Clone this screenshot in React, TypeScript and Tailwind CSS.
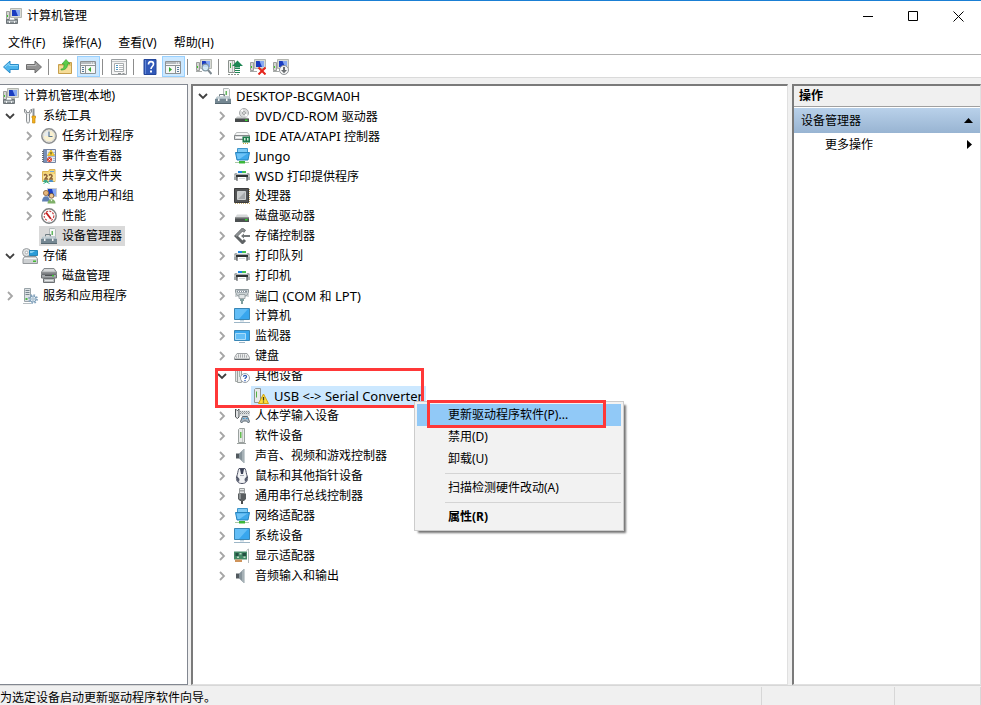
import { Fragment, type ReactNode } from "react";
import { clsx } from "clsx";

function Svg({ children, size = 16 }: { children: ReactNode; size?: number }) {
  return (
    <svg width={size} height={size} viewBox="0 0 16 16" className="block shrink-0" aria-hidden="true">
      {children}
    </svg>
  );
}

/* ---------- 共用图形 ---------- */

function TowerMonitor() {
  return (
    <>
      <path d="M0.5 3.5h3v8h-3z" fill="#d5d7d2" stroke="#9c9e9c" />
      <rect x="1" y="7" width="1" height="2" fill="#3fc72c" />
      <path d="M4.500 0.500h11v9h-11z" fill="#d9dcd6" stroke="#b4b7b1" />
      <rect x="6" y="2" width="8" height="6" fill="#1a3cc0" />
      <path d="M9.500 2H14v6h-2z" fill="#86a8f2" />
    </>
  );
}

function Management() {
  return (
    <Svg>
      <TowerMonitor />
      <path d="M8 10h4v1.500H8z" fill="#b5b7b2" />
      <path d="M0.500 11.500h11v4H0.500z" fill="#8b9296" stroke="#6d7478" />
      <path d="M3.500 11.500h5" stroke="#d6dbde" />
      <path d="M1 13.500h10" stroke="#b6bdc0" />
      <path d="M3 13h1v2H3zM8 13h1v2H8z" fill="#eef0f1" />
    </Svg>
  );
}

function Tools() {
  return (
    <Svg>
      <path d="M2.500 1v3l2 2v7.500c0 2 3 2 3 0V6l2-2V1L7.500 3v1.500h-3V3z" fill="#e4e6e7" stroke="#8c9093" />
      <path d="M6 7v6" stroke="#fff" />
      <path d="M11.500 0.500v8" stroke="#8c9093" strokeWidth="2" />
      <path d="M10 8h3.500v2H13v5h-2.500v-5H10z" fill="#f2b01c" stroke="#c98b10" strokeWidth="0.700" />
    </Svg>
  );
}

function ClockIcon() {
  return (
    <Svg>
      <circle cx="8" cy="8" r="7.200" fill="#fbf4d9" stroke="#8b8e91" strokeWidth="1.500" />
      <circle cx="8" cy="8" r="5.700" fill="#faf1d0" stroke="#dcdcda" strokeWidth="1" />
      <path d="M8 8V3A5 5 0 0 0 3 8z" fill="#e5ebf0" />
      <path d="M8 3.500V8.500h3.500" fill="none" stroke="#5b7896" strokeWidth="1.200" />
    </Svg>
  );
}

function EventLog() {
  return (
    <Svg>
      <path d="M2.500 1.500h12v13h-12z" fill="#e6ebf2" stroke="#7584a2" />
      <path d="M3 2h3v12H3z" fill="#7790b8" />
      <path d="M1 3.500h2M1 5.500h2M1 7.500h2M1 9.500h2M1 11.500h2M1 13.500h2" stroke="#646d7a" />
      <path d="M7 4.500h7M7 6.500h7M7 8.500h7M12 10.500h2M12 12.500h2" stroke="#a8bad4" />
      <path d="M10 2l3.500 5.500h-7z" fill="#ffd62a" stroke="#d6a71a" strokeWidth="0.700" />
      <path d="M10 4v2.500" stroke="#333" />
      <circle cx="8.500" cy="11.500" r="2.500" fill="#d6402e" />
      <path d="M7.500 10.500l2 2M9.500 10.500l-2 2" stroke="#fff" strokeWidth="0.800" />
    </Svg>
  );
}

function SharedFolder() {
  return (
    <Svg>
      <path d="M1.500 3.500h6l1-2h5.500v12h-12.500z" fill="#f4d678" stroke="#dcb452" />
      <path d="M9 3h4v1H9z" fill="#6ba5da" />
      <path d="M2 6h12v7H2z" fill="#f9e39d" />
      <path d="M3 7.500c1-1.500 3.500-1 3 1L4 11h3" fill="none" stroke="#8b6136" strokeWidth="1.500" />
      <path d="M8 7.500c1-1.500 3.500-1 3 1L9 11h3" fill="none" stroke="#8b6136" strokeWidth="1.500" />
      <path d="M2 14c0.500-3 4.500-3 5 0z" fill="#3ba88a" />
      <path d="M7.500 14c0.500-3 4.500-3 5 0z" fill="#4a8ec8" />
      <path d="M2.500 15.500l3-1.500 3 1.500" fill="none" stroke="#3fb184" />
    </Svg>
  );
}

function UsersIcon() {
  return (
    <Svg>
      <path d="M6.500 0.500h9v8h-9z" fill="#1a3cc0" stroke="#c6cace" />
      <path d="M11 1h4v7h-2z" fill="#86a8f2" />
      <circle cx="5" cy="5" r="2.600" fill="#e6b67b" stroke="#8a6238" strokeWidth="0.800" />
      <path d="M1 13.500c0-7 8-7 8 0z" fill="#5f7fb3" />
      <circle cx="10.500" cy="7.800" r="2.400" fill="#ecc591" stroke="#6b4a26" strokeWidth="0.800" />
      <path d="M6.500 15.500c0-6 8-6 8 0z" fill="#7fb069" />
      <path d="M9.500 11.500l1 2 1-2" fill="#fff" />
    </Svg>
  );
}

function Performance() {
  return (
    <Svg>
      <circle cx="8" cy="8" r="7.200" fill="#fff" stroke="#7d8082" strokeWidth="1.400" />
      <circle cx="8" cy="8" r="4.800" fill="none" stroke="#c94444" strokeWidth="1.200" strokeDasharray="2 1.200" />
      <path d="M5 4.500l5 6.500" stroke="#c41f1f" strokeWidth="1.800" />
      <path d="M7 12.500h3" stroke="#fff" strokeWidth="2" />
    </Svg>
  );
}

function DeviceManager() {
  return (
    <Svg>
      <path d="M8.500 0.500h5l1 1v7h-6z" fill="#f5f7f6" stroke="#b4babb" />
      <path d="M10.500 3H12v4h-1.500z" fill="#62b85e" />
      <path d="M4.500 9V6.500h5V9" fill="none" stroke="#6f7c82" />
      <path d="M2 8.500h12.500l1.500 3H0z" fill="#a9b9c1" />
      <path d="M0 11h16v4.500H0z" fill="#748792" />
      <path d="M2 9h12" stroke="#d7e0e4" />
      <path d="M3 10.500h1.500V13H3zM11 10.500h1.500V13H11z" fill="#f4f6f7" />
      <path d="M0 15.500h16" stroke="#566770" />
    </Svg>
  );
}

function Storage() {
  return (
    <Svg>
      <circle cx="4.500" cy="4.500" r="4" fill="#dfe1e2" stroke="#9b9fa2" />
      <circle cx="4.500" cy="4.500" r="1.300" fill="#fff" stroke="#979b9d" strokeWidth="0.700" />
      <path d="M7.500 2.500h8v5h-8z" fill="#2a9cd8" stroke="#2787b8" />
      <path d="M8 3h5l-3 2H8z" fill="#86d2f5" />
      <path d="M2.500 8.500h11.500l1.500 2.500v4.500H1V11z" fill="#cdd0d2" stroke="#94989b" />
      <path d="M2 10.500h12.500" stroke="#f7f7f7" />
      <rect x="11" y="12.500" width="3" height="1.500" fill="#45b933" />
    </Svg>
  );
}

function DiskManagement() {
  return (
    <Svg>
      <path d="M3 0.500h10l2.500 3.500v2H0.500V4z" fill="#bfc2c4" stroke="#85898c" />
      <path d="M3 2h10" stroke="#eceeee" />
      <path d="M1 5h14" stroke="#5e6265" />
      <path d="M0.500 6.500h15V10H0.500z" fill="#a3a7aa" stroke="#6c7073" />
      <path d="M4 7.500h8" stroke="#4f5355" />
      <path d="M2.500 10.500h11v4h-11z" fill="#b8bcbe" stroke="#6c7073" />
      <path d="M4 12.500h8" stroke="#e6e8e9" />
      <rect x="11" y="7" width="2" height="1.500" fill="#3bc130" />
    </Svg>
  );
}

function Services() {
  return (
    <Svg>
      <path d="M2.500 0.500h6v13h-6z" fill="#dde2e5" stroke="#9aa4a9" />
      <path d="M3.500 2.500h4M3.500 4.500h4M3.500 6.500h4" stroke="#79878f" />
      <rect x="3.500" y="10" width="2" height="2" fill="#4fb848" />
      <path d="M1 15.500h8" stroke="#b5bcc0" />
      <circle cx="11" cy="11" r="4" fill="none" stroke="#86a5be" strokeWidth="1.800" strokeDasharray="1.600 1.540" />
      <circle cx="11" cy="11" r="3" fill="#dfeaf2" stroke="#7fa0ba" strokeWidth="1" />
      <circle cx="11" cy="11" r="1.200" fill="#fff" stroke="#7393ad" strokeWidth="0.700" />
    </Svg>
  );
}

function Dvd() {
  return (
    <Svg>
      <circle cx="10" cy="5" r="4.500" fill="#dcdddd" stroke="#a6a9aa" />
      <path d="M10 5L6.500 2.500 8.500 1zM10 5l4 2-2 2z" fill="#fff" />
      <circle cx="10" cy="5" r="1.400" fill="#fff" stroke="#8b8e8f" strokeWidth="0.900" />
      <path d="M3 8.500h5l2 1h3.500l1.500 1.500H1z" fill="#c8cbcc" />
      <path d="M1 10.500h14V14H1z" fill="#464a4b" />
      <rect x="11" y="11.500" width="2.500" height="1.500" fill="#38d630" />
    </Svg>
  );
}

function Ide() {
  return (
    <Svg>
      <path d="M2.500 4.500h11l2 3H0.500z" fill="#f4f5f5" stroke="#b9bcbd" />
      <path d="M0.500 7.500h15v4H0.500z" fill="#dcdedf" stroke="#85898b" />
      <path d="M2 9.500h6" stroke="#fff" />
      <path d="M8.500 8.500H16v6H8.500z" fill="#1e7b4b" />
      <path d="M10 10h1.500v2.500H10zM13 10h1.500v2.500H13z" fill="#c8e7d4" />
      <path d="M9 15.500h6" stroke="#c9a83c" strokeDasharray="1 1" />
    </Svg>
  );
}

function NetworkIcon() {
  return (
    <Svg>
      <path d="M3.500 0.500h10v6h-10z" fill="#7ccaf5" stroke="#3f95c9" />
      <path d="M1.500 4.500h14l-1.500 7.500h-11z" fill="#3fa9ec" stroke="#2583bd" />
      <path d="M2.500 5.500h11l-8 5.500H3.500z" fill="#6fc3f6" />
      <path d="M1 14.500h14" stroke="#a9c9a7" />
      <path d="M5 13h6v2.500H5z" fill="#3cb63a" />
    </Svg>
  );
}

function PrinterIcon() {
  return (
    <Svg>
      <path d="M4 3h4v2H4z" fill="#1b84e0" />
      <path d="M8 3h4v2H8z" fill="#3fbf52" />
      <path d="M1 5h14l1 1.500V12H0V6.500z" fill="#a5aaac" />
      <path d="M3 5h10v1H3z" fill="#e9edee" />
      <path d="M0 8h2M14 8h2" stroke="#d9dcdd" />
      <path d="M2 7h12v2H2z" fill="#2d3133" />
      <path d="M3.500 9h9l0.500 4H3z" fill="#fff" />
      <path d="M3 8.500V13M13 8.500V13" stroke="#44484a" />
      <path d="M5 10.500h6" stroke="#d5d8d9" />
    </Svg>
  );
}

function Cpu() {
  return (
    <Svg>
      <path d="M1 15.500h15M15.500 1v15" stroke="#c4ad70" strokeDasharray="1 1" />
      <path d="M0.500 0.500h14v14h-14z" fill="#515354" stroke="#3b3b3c" />
      <path d="M3.500 3.500h8v8h-8z" fill="#a7aaac" stroke="#cdd0d0" />
      <path d="M4 4h7L4 11z" fill="#c9cccd" />
    </Svg>
  );
}

function DiskDrive() {
  return (
    <Svg>
      <path d="M3 6.500h10l2 3H1z" fill="#d6d8d9" />
      <path d="M1 9.500h14V14H1z" fill="#4c5051" />
      <path d="M1 10h14" stroke="#85898b" />
      <rect x="11" y="11" width="2.500" height="1.500" fill="#33d82f" />
    </Svg>
  );
}

function StorageController() {
  return (
    <Svg>
      <path d="M11 3.500L8.500 1.500 2 8l6.500 6.500 2.500-2.500" fill="none" stroke="#5f6365" strokeWidth="3" />
      <path d="M10.500 3.500L8.500 1.500 2 8" fill="none" stroke="#8d9193" strokeWidth="2" />
      <path d="M7 8l3-2.500V7h6v2h-6v1.500z" fill="#74787a" />
    </Svg>
  );
}

function Port() {
  return (
    <Svg>
      <path d="M1.500 1.500h13v3l-2 3.500h-9l-2-3.500z" fill="#cbd2d4" stroke="#8f999c" />
      <path d="M3 2.500h10v2H3z" fill="#84919a" />
      <path d="M4 3.500h8" stroke="#fff" strokeDasharray="1 1" />
      <path d="M5 6.500h6v4H5z" fill="#e1e5e6" stroke="#8f999c" strokeWidth="0.800" />
      <path d="M6 11h4v2H9v3H7v-3H6z" fill="#7f9e9e" />
      <path d="M2 6v3M14 6v3" stroke="#a3adb1" />
    </Svg>
  );
}

function ComputerIcon() {
  return (
    <Svg>
      <path d="M0.500 0.500h15v11h-15z" fill="#38a6ee" stroke="#3986b5" />
      <path d="M1 1h13L5 11H1z" fill="#63bef7" />
      <path d="M6 12h4v1.500H6z" fill="#c3d5e1" />
      <path d="M0 14.500h16" stroke="#9db6c7" />
    </Svg>
  );
}

function MonitorIcon() {
  return (
    <Svg>
      <path d="M0.500 2.500h15v10h-15z" fill="#38a6ee" stroke="#3986b5" />
      <path d="M1.500 5.500h10v6h-10z" fill="#63bef7" stroke="#a9dcfa" />
      <path d="M5 14.500h6" stroke="#9db6c7" />
    </Svg>
  );
}

function KeyboardIcon() {
  return (
    <Svg>
      <path d="M3 5.500h10l2.500 4v1.500H0.500V9.500z" fill="#eceded" stroke="#9da0a3" />
      <path d="M4 7h8M2 9h12" stroke="#94989b" strokeDasharray="1 1" />
      <path d="M3 8h10" stroke="#94989b" strokeDasharray="1 1" strokeDashoffset="1" />
      <path d="M0.500 11.500h15" stroke="#63676a" />
    </Svg>
  );
}

function SoftwareDevice() {
  return (
    <Svg>
      <path d="M4.500 1.500l1-1h5v14h-6z" fill="#e8eae9" stroke="#9ba19f" />
      <path d="M8.500 1v13" stroke="#c4c8c6" />
      <path d="M6 4h1.500v6H6z" fill="#64bb50" />
      <path d="M3 15.500h9" stroke="#9ba19f" />
    </Svg>
  );
}

function UnknownDevice() {
  return (
    <Svg>
      <path d="M1.500 2.500l1-1h1v12h-2z" fill="#e3e5e4" stroke="#a5aaa8" />
      <path d="M3.500 0.500h4v14h-4z" fill="#e8eae9" stroke="#9ba19f" />
      <path d="M5.500 3v6" stroke="#a5b7ad" />
      <circle cx="11" cy="10" r="4.500" fill="#fff" stroke="#99a1a8" />
      <path d="M9.500 8.800c0-2 3.200-1.800 3 0 0 1-1.500 1-1.500 2.200M11 12v1.300" fill="none" stroke="#2b5bb5" strokeWidth="1.300" />
    </Svg>
  );
}

function WarnDevice() {
  return (
    <Svg>
      <path d="M1.500 1.500l1-1h5v14h-6z" fill="#e8eae9" stroke="#8f9593" />
      <path d="M3.500 3.500v6" stroke="#55b444" />
      <path d="M10.500 6l5 9.500h-10z" fill="#ffdf3a" stroke="#cfa218" />
      <path d="M10.500 9v3.500M10.500 13.500v1" stroke="#3a3a20" strokeWidth="1.300" />
    </Svg>
  );
}

function Hid() {
  return (
    <Svg>
      <path d="M1.500 1L3 2.500h0.500L5 1v8L3.500 10.500 1.500 9z" fill="#dfe1e3" stroke="#4d5254" />
      <path d="M6 2.500h10V8H6z" fill="#dcdfe0" />
      <path d="M6 3.500h10M6 5.500h10" stroke="#868c8f" strokeDasharray="1 1" />
      <path d="M7 4.500h9" stroke="#a6abad" strokeDasharray="1 1" />
      <path d="M8.500 8.500h5l2 5-1 1.500-2-2h-3l-2 2-1-1.500z" fill="#a9b5c1" stroke="#5d6971" />
      <path d="M9 10.500h1.500M12 10.500h1.500" stroke="#3d9ad2" />
    </Svg>
  );
}

function Speaker() {
  return (
    <Svg>
      <path d="M2 5.500h3v5H2z" fill="#525a5f" />
      <path d="M5 5.500L10 1v14l-5-4.500z" fill="#86939a" />
      <path d="M8 3L10 1v14l-2-2z" fill="#a6b1b6" />
      <path d="M10.500 1v14" stroke="#c8d0d3" />
    </Svg>
  );
}

function MouseIcon() {
  return (
    <Svg>
      <path d="M5 0.500h6c1.500 3 1 5 2.500 8.500 0.500 4-1.500 6.500-5.500 6.500S2 13 2.500 9C4 5.500 3.500 3.500 5 0.500z" fill="#f1f2f4" stroke="#4d5264" />
      <path d="M6 1h4L9 6H7z" fill="#3a4056" />
      <path d="M3 8l2.500 3-0.500 3-2-1.500zM13 8l-2.500 3 0.500 3 2-1.500z" fill="#545a6c" />
      <path d="M6 7.500h4" stroke="#a5a9b3" />
    </Svg>
  );
}

function Usb() {
  return (
    <Svg>
      <path d="M5.500 0.500h5v5h-5z" fill="#e3e5e5" stroke="#969a9b" />
      <path d="M7 2v1.500M9 2v1.500" stroke="#5f6364" />
      <path d="M4 5.500h8V11l-2 2H6l-2-2z" fill="#5a5e60" />
      <path d="M5 6h2v5H5z" fill="#8c9193" />
      <path d="M8 13v3" stroke="#4a4d4e" strokeWidth="2" />
    </Svg>
  );
}

function DisplayAdapter() {
  return (
    <Svg>
      <path d="M0 3.500h13v8H0z" fill="#438966" />
      <path d="M1.500 5h3v3h-3zM8.500 5h3.500v3H8.500z" fill="#245042" />
      <path d="M5.500 5h2v1.500h-2zM9.500 8.500h2V10h-2zM3 8.500h2V10H3z" fill="#b9d8c5" />
      <path d="M1 11.500h7V14H1z" fill="#cf935a" />
      <path d="M12.500 2.500l2-1.500M14.500 1v14" stroke="#b5bbbd" fill="none" />
    </Svg>
  );
}

/* ---------- 工具栏图标 ---------- */

function Back() {
  return (
    <Svg>
      <path d="M0.500 8L7 2v3.500h8.500v5H7V14z" fill="#4db5ed" stroke="#2b8cc9" />
      <path d="M2 8l4-3.500v2h9" fill="none" stroke="#8cd8fb" />
    </Svg>
  );
}

function Forward() {
  return (
    <Svg>
      <path d="M15.500 8L9 2v3.500H0.500v5H9V14z" fill="#939393" stroke="#6e6e6e" />
      <path d="M1 6.500h9v-2" fill="none" stroke="#bbb" />
    </Svg>
  );
}

function FolderUp() {
  return (
    <Svg>
      <path d="M1.500 5.500h6l1-2h6v11h-13z" fill="#e9c672" stroke="#c79f4c" />
      <path d="M2 7h12v7H2z" fill="#f5dc98" />
      <path d="M4 10c3 0 3-2 3-5H5l4-4.500L13 5h-2.500c0 4-2 6-6.500 6z" fill="#5ccc49" stroke="#3ba234" strokeWidth="0.700" />
    </Svg>
  );
}

function PaneIcon({ side }: { side: "left" | "right" }) {
  return (
    <Svg>
      <path d="M0.500 2.500h15v12h-15z" fill="#f6f7f7" stroke="#8d9194" />
      <path d="M1 3h14v2H1z" fill="#b7bcc0" />
      <path d="M11 4h1M13 4h1" stroke="#fff" />
      <path d="M0.500 6.500h15" stroke="#8d9194" />
      {side === "left" ? (
        <>
          <path d="M5.500 7v7.500" stroke="#8b9092" />
          <path d="M2 8.500h2M2 10.500h2M2 12.500h2" stroke="#57799b" />
          <path d="M11 8v5L8 10.500z" fill="#35a92f" />
        </>
      ) : (
        <>
          <path d="M10.500 7v7.500" stroke="#8b9092" />
          <path d="M12 8.500h2M12 10.500h2M12 12.500h2" stroke="#57799b" />
          <path d="M4 8v5l3-2.500z" fill="#35a92f" />
        </>
      )}
    </Svg>
  );
}

function Properties() {
  return (
    <Svg>
      <path d="M0.500 0.500h15v15h-15z" fill="#f4f4f4" stroke="#9a9ea0" />
      <path d="M1 2.500h14" stroke="#c1c4c6" />
      <path d="M3.500 4.500h9v8h-9z" fill="#fff" stroke="#a9adaf" />
      <path d="M5 6.500h2M5 8.500h2M5 10.500h2" stroke="#4b97c5" />
      <path d="M8 6.500h4M8 8.500h4M8 10.500h4" stroke="#b3b7b9" />
      <path d="M7 14.500h3M11.500 14.500h2" stroke="#8d9193" />
    </Svg>
  );
}

function Help() {
  return (
    <Svg>
      <path d="M2 0.500h12v15H2z" fill="#3159b9" stroke="#24469a" />
      <path d="M3.500 1v14" stroke="#6387d6" />
      <path d="M6.500 5.500c0-4 5-3.500 5-0.500C11.500 7.500 9 7.500 9 10" fill="none" stroke="#fff" strokeWidth="1.600" />
      <path d="M8 11.500h2v2H8z" fill="#fff" />
    </Svg>
  );
}

function Scan() {
  return (
    <Svg>
      <TowerMonitor />
      <path d="M0 12.500h6" stroke="#a7aba9" />
      <circle cx="9.500" cy="8.500" r="3.300" fill="#d2ebf8" fillOpacity="0.900" stroke="#8399a5" strokeWidth="1.200" />
      <path d="M12 11l3.500 4" stroke="#7d888f" strokeWidth="2" />
    </Svg>
  );
}

function UpdateDriver() {
  return (
    <Svg>
      <path d="M1.500 1.500h6v12h-6z" fill="#eceeec" stroke="#8a918d" />
      <path d="M5.500 2v11" stroke="#b9beba" />
      <path d="M3.500 4v5" stroke="#45a94a" />
      <path d="M1 15.500h11" stroke="#8a918d" strokeDasharray="2 1" />
      <path d="M10.500 1.500L16 7h-3v1.500H8V7H5z" fill="#1d8653" />
      <path d="M8 9.500h5M8 11.500h5M8 13.500h5" stroke="#1d8653" />
    </Svg>
  );
}

function Uninstall() {
  return (
    <Svg>
      <TowerMonitor />
      <path d="M0 12.500h7" stroke="#a7aba9" />
      <path d="M8.500 8.500l7 7M15.500 8.500l-7 7" stroke="#e5251c" strokeWidth="2" />
    </Svg>
  );
}

function Disable() {
  return (
    <Svg>
      <TowerMonitor />
      <path d="M0 12.500h6" stroke="#a7aba9" />
      <circle cx="11" cy="11" r="4.500" fill="#f4f5f5" stroke="#8f9396" />
      <path d="M10 8h2v3h2l-3 3.200L8 11h2z" fill="#6a6e71" />
    </Svg>
  );
}

/* ---------- 数据 ---------- */

interface TreeNode {
  label: string;
  icon: ReactNode;
  level: 0 | 1 | 2;
  state?: "open" | "closed";
  selected?: boolean;
}

const NAV_TREE: TreeNode[] = [
  { label: "系统工具", icon: <Tools />, level: 0, state: "open" },
  { label: "任务计划程序", icon: <ClockIcon />, level: 1, state: "closed" },
  { label: "事件查看器", icon: <EventLog />, level: 1, state: "closed" },
  { label: "共享文件夹", icon: <SharedFolder />, level: 1, state: "closed" },
  { label: "本地用户和组", icon: <UsersIcon />, level: 1, state: "closed" },
  { label: "性能", icon: <Performance />, level: 1, state: "closed" },
  { label: "设备管理器", icon: <DeviceManager />, level: 1, selected: true },
  { label: "存储", icon: <Storage />, level: 0, state: "open" },
  { label: "磁盘管理", icon: <DiskManagement />, level: 1 },
  { label: "服务和应用程序", icon: <Services />, level: 0, state: "closed" },
];

const DEVICES_BEFORE: [string, ReactNode][] = [
  ["DVD/CD-ROM 驱动器", <Dvd />],
  ["IDE ATA/ATAPI 控制器", <Ide />],
  ["Jungo", <NetworkIcon />],
  ["WSD 打印提供程序", <PrinterIcon />],
  ["处理器", <Cpu />],
  ["磁盘驱动器", <DiskDrive />],
  ["存储控制器", <StorageController />],
  ["打印队列", <PrinterIcon />],
  ["打印机", <PrinterIcon />],
  ["端口 (COM 和 LPT)", <Port />],
  ["计算机", <ComputerIcon />],
  ["监视器", <MonitorIcon />],
  ["键盘", <KeyboardIcon />],
];

const DEVICES_AFTER: [string, ReactNode][] = [
  ["人体学输入设备", <Hid />],
  ["软件设备", <SoftwareDevice />],
  ["声音、视频和游戏控制器", <Speaker />],
  ["鼠标和其他指针设备", <MouseIcon />],
  ["通用串行总线控制器", <Usb />],
  ["网络适配器", <NetworkIcon />],
  ["系统设备", <ComputerIcon />],
  ["显示适配器", <DisplayAdapter />],
  ["音频输入和输出", <Speaker />],
];

const TOOLBAR: { label: string; icon: ReactNode; pressed?: boolean }[][] = [
  [
    { label: "后退", icon: <Back /> },
    { label: "前进", icon: <Forward /> },
  ],
  [
    { label: "上一级", icon: <FolderUp /> },
    { label: "显示/隐藏控制台树", icon: <PaneIcon side="left" />, pressed: true },
  ],
  [{ label: "属性", icon: <Properties /> }],
  [
    { label: "帮助", icon: <Help /> },
    { label: "显示/隐藏操作窗格", icon: <PaneIcon side="right" />, pressed: true },
  ],
  [{ label: "扫描检测硬件改动", icon: <Scan /> }],
  [
    { label: "更新驱动程序软件", icon: <UpdateDriver /> },
    { label: "卸载", icon: <Uninstall /> },
    { label: "禁用", icon: <Disable /> },
  ],
];

const INDENT = { 0: "pl-[2px]", 1: "pl-[21px]", 2: "pl-[40px]" };

/* ---------- 组件 ---------- */

function Chevron({ open }: { open: boolean }) {
  return (
    <Svg>
      {open ? (
        <path d="M4 6l4 4 4-4" fill="none" stroke="#404040" strokeWidth="1.800" />
      ) : (
        <path d="M6 4l4 4-4 4" fill="none" stroke="#a6a6a6" strokeWidth="1.800" />
      )}
    </Svg>
  );
}

// 西文比中文大一号
function Label({ text }: { text: string }) {
  return (
    <span>
      {text.split(/([\x20-\x7e]+)/).map((part, i) =>
        i % 2 ? (
          <span key={i} className="text-[13px]">
            {part}
          </span>
        ) : (
          part
        )
      )}
    </span>
  );
}

function TreeRow({ label, icon, level, state, selected, selectedClass = "bg-[#d9d9d9]" }: TreeNode & { selectedClass?: string }) {
  return (
    <div className={clsx("flex h-5 items-center gap-0.5", INDENT[level])}>
      {state ? (
        <button type="button" aria-label={state === "open" ? "折叠" : "展开"} className="shrink-0">
          <Chevron open={state === "open"} />
        </button>
      ) : (
        <span className="w-4 shrink-0" />
      )}
      <span
        className={clsx(
          "flex h-5 items-center gap-[5px] pr-[3px] pl-0.5 whitespace-nowrap",
          selected && selectedClass
        )}
      >
        {icon}
        <Label text={label} />
      </span>
    </div>
  );
}

function MenuItem({ children, active, bold }: { children: ReactNode; active?: boolean; bold?: boolean }) {
  return (
    <button
      type="button"
      role="menuitem"
      className={clsx(
        "relative flex h-[22px] w-full items-center pl-[31px] text-left whitespace-nowrap",
        active && "bg-[#91c9f7]",
        bold && "font-bold"
      )}
    >
      {children}
      {active && <span className="absolute -top-1 right-[15px] -bottom-0.5 left-[10px] border-3 border-[#ff3838]" />}
    </button>
  );
}

function MenuSeparator() {
  return <div role="separator" className="my-[3px] ml-7 h-px bg-[#d4d4d4]" />;
}

function ContextMenu() {
  return (
    <div
      role="menu"
      className="absolute top-[35px] left-[221px] z-10 w-[210px] border border-[#cccccc] bg-[#f2f2f2] p-0.5 shadow-[3px_3px_2px_-1px_rgba(0,0,0,0.55)]"
    >
      <MenuItem active>更新驱动程序软件(P)...</MenuItem>
      <MenuItem>禁用(D)</MenuItem>
      <MenuItem>卸载(U)</MenuItem>
      <MenuSeparator />
      <MenuItem>扫描检测硬件改动(A)</MenuItem>
      <MenuSeparator />
      <MenuItem bold>属性(R)</MenuItem>
    </div>
  );
}

function TitleBar() {
  return (
    <header className="flex h-[31px] items-stretch border-t border-[#1a7fd4] pl-[6px]">
      <div className="flex flex-1 items-center gap-[5px]">
        <Management />
        <h1>计算机管理</h1>
      </div>
      <button type="button" aria-label="最小化" className="flex w-[45px] items-center justify-center">
        <svg width="11" height="11" viewBox="0 0 11 11">
          <path d="M0 5.500h10" stroke="#000" />
        </svg>
      </button>
      <button type="button" aria-label="最大化" className="flex w-[45px] items-center justify-center">
        <svg width="11" height="11" viewBox="0 0 11 11">
          <path d="M0.500 0.500h9v9h-9z" fill="none" stroke="#000" />
        </svg>
      </button>
      <button type="button" aria-label="关闭" className="flex w-[45px] items-center justify-center">
        <svg width="11" height="11" viewBox="0 0 11 11">
          <path d="M0.500 0.500l10 10M10.500 0.500l-10 10" stroke="#000" />
        </svg>
      </button>
    </header>
  );
}

function Toolbar() {
  return (
    <div role="toolbar" className="flex h-[23px] border-b border-[#dadada] pt-px">
      {TOOLBAR.map((group, i) => (
        <Fragment key={i}>
          {i > 0 && <span className="mt-[3px] mr-[5px] mb-0.5 ml-0.5 w-px bg-[#8c8c8c]" />}
          {group.map((item) => (
            <button
              key={item.label}
              type="button"
              aria-label={item.label}
              className={clsx(
                "flex w-[23px] items-center justify-center pt-px pr-px",
                item.pressed && "border border-[#99d1ff] bg-[#cce8ff]"
              )}
            >
              {item.icon}
            </button>
          ))}
        </Fragment>
      ))}
    </div>
  );
}

function DeviceTree() {
  return (
    <main className="min-w-0 flex-1 border-t-2 border-r border-b border-l-2 border-t-[#7a7a7a] border-r-[#e0e0e0] border-b-[#e0e0e0] border-l-[#7a7a7a] bg-white">
      <TreeRow label="DESKTOP-BCGMA0H" icon={<DeviceManager />} level={0} state="open" />
      {DEVICES_BEFORE.map(([label, icon]) => (
        <TreeRow key={label} label={label} icon={icon} level={1} state="closed" />
      ))}
      <div className="relative">
        <TreeRow label="其他设备" icon={<UnknownDevice />} level={1} state="open" />
        <TreeRow
          label="USB <-> Serial Converter"
          icon={<WarnDevice />}
          level={2}
          selected
          selectedClass="bg-[#cce8ff]"
        />
        <span className="absolute top-0.5 -bottom-0.5 left-[22px] w-[209px] border-3 border-[#ff3838]" />
        <ContextMenu />
      </div>
      {DEVICES_AFTER.map(([label, icon]) => (
        <TreeRow key={label} label={label} icon={icon} level={1} state="closed" />
      ))}
    </main>
  );
}

function ActionsPane() {
  return (
    <aside className="w-[189px] shrink-0 border-t-2 border-r border-b border-l-2 border-t-[#7a7a7a] border-r-[#e0e0e0] border-b-[#e0e0e0] border-l-[#7a7a7a] bg-white">
      <h2 className="mb-px flex h-[21px] items-center border-b border-[#a0a0a0] bg-[#f0f0f0] pl-[5px] font-bold">操作</h2>
      <button
        type="button"
        className="flex h-[25px] w-full items-center justify-between bg-linear-to-b from-[#b9d1ea] to-[#98b4d2] pr-[7px] pl-[7px]"
      >
        设备管理器
        <svg width="9" height="5" viewBox="0 0 9 5" aria-hidden="true">
          <path d="M4.500 0L9 5H0z" />
        </svg>
      </button>
      <button type="button" className="flex h-[23px] w-full items-center justify-between pr-[8px] pl-[31px]">
        更多操作
        <svg width="5" height="9" viewBox="0 0 5 9" aria-hidden="true">
          <path d="M0 0l5 4.500L0 9z" />
        </svg>
      </button>
    </aside>
  );
}

export default function App() {
  return (
    <div className="flex min-h-screen flex-col bg-white font-['Noto_Sans','Noto_Sans_CJK_SC',sans-serif] text-xs leading-5 text-black">
      <TitleBar />
      <nav className="flex h-6 items-center gap-[17px] border-b border-[#b0b0b0] pl-2">
        {["文件(F)", "操作(A)", "查看(V)", "帮助(H)"].map((label) => (
          <button key={label} type="button">
            {label}
          </button>
        ))}
      </nav>
      <Toolbar />

      <div className="flex flex-1 bg-[#f0f0f0] pt-[6px]">
        <nav className="mr-[3px] w-[188px] shrink-0 border-t border-r border-b border-[#828790] bg-white pt-px">
          <div className="flex h-5 items-center gap-[5px] pl-[3px]">
            <Management />
            计算机管理(本地)
          </div>
          {NAV_TREE.map((node) => (
            <TreeRow key={node.label} {...node} />
          ))}
        </nav>
        <DeviceTree />
        <div className="w-1 shrink-0" />
        <ActionsPane />
      </div>

      <footer className="flex h-5 border-t border-[#d7d7d7] bg-[#f0f0f0]">
        <span className="flex flex-1 items-center pt-1">为选定设备启动更新驱动程序软件向导。</span>
        <span className="mt-px w-[133px] border-l border-[#d7d7d7]" />
        <span className="mt-px w-[87px] border-x border-[#d7d7d7]" />
      </footer>
    </div>
  );
}
